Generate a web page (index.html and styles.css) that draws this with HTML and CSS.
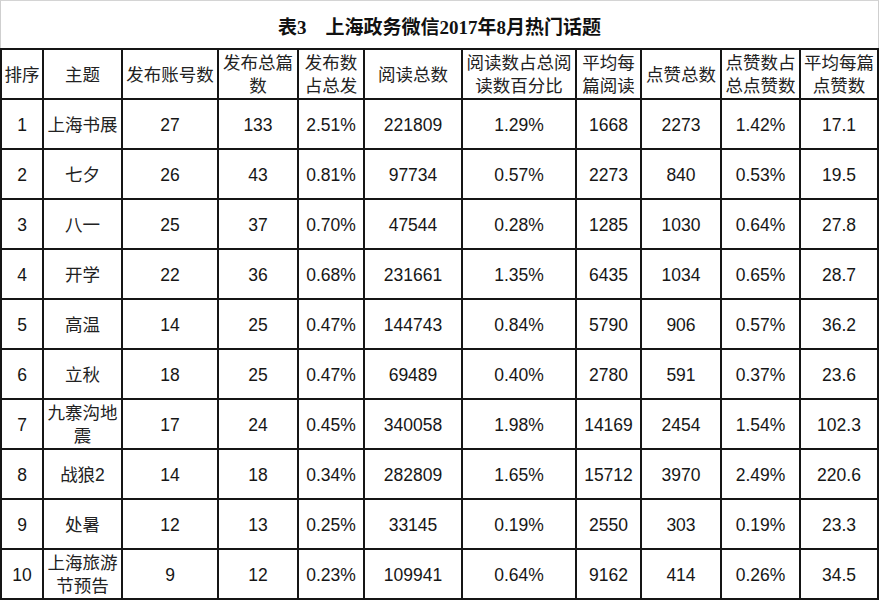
FILE: index.html
```html
<!DOCTYPE html>
<html lang="zh-CN">
<head>
<meta charset="utf-8">
<title>表3 上海政务微信2017年8月热门话题</title>
<link rel="stylesheet" href="styles.css">
</head>
<body>
<div class="sheet">
  <div class="caption">表3　上海政务微信2017年8月热门话题</div>
  <table class="data">
    <colgroup>
      <col class="c1"><col class="c2"><col class="c3"><col class="c4"><col class="c5"><col class="c6">
      <col class="c7"><col class="c8"><col class="c9"><col class="c10"><col class="c11">
    </colgroup>
    <thead>
      <tr>
        <th>排序</th><th>主题</th><th>发布账号数</th><th>发布总篇<br>数</th><th>发布数<br>占总发</th><th>阅读总数</th>
        <th>阅读数占总阅<br>读数百分比</th><th>平均每<br>篇阅读</th><th>点赞总数</th><th>点赞数占<br>总点赞数</th><th>平均每篇<br>点赞数</th>
      </tr>
    </thead>
    <tbody>
      <tr><td>1</td><td class="topic">上海书展</td><td>27</td><td>133</td><td>2.51%</td><td>221809</td><td>1.29%</td><td>1668</td><td>2273</td><td>1.42%</td><td>17.1</td></tr>
      <tr><td>2</td><td class="topic">七夕</td><td>26</td><td>43</td><td>0.81%</td><td>97734</td><td>0.57%</td><td>2273</td><td>840</td><td>0.53%</td><td>19.5</td></tr>
      <tr><td>3</td><td class="topic">八一</td><td>25</td><td>37</td><td>0.70%</td><td>47544</td><td>0.28%</td><td>1285</td><td>1030</td><td>0.64%</td><td>27.8</td></tr>
      <tr><td>4</td><td class="topic">开学</td><td>22</td><td>36</td><td>0.68%</td><td>231661</td><td>1.35%</td><td>6435</td><td>1034</td><td>0.65%</td><td>28.7</td></tr>
      <tr><td>5</td><td class="topic">高温</td><td>14</td><td>25</td><td>0.47%</td><td>144743</td><td>0.84%</td><td>5790</td><td>906</td><td>0.57%</td><td>36.2</td></tr>
      <tr><td>6</td><td class="topic">立秋</td><td>18</td><td>25</td><td>0.47%</td><td>69489</td><td>0.40%</td><td>2780</td><td>591</td><td>0.37%</td><td>23.6</td></tr>
      <tr><td>7</td><td class="topic">九寨沟地<br>震</td><td>17</td><td>24</td><td>0.45%</td><td>340058</td><td>1.98%</td><td>14169</td><td>2454</td><td>1.54%</td><td>102.3</td></tr>
      <tr><td>8</td><td class="topic">战狼2</td><td>14</td><td>18</td><td>0.34%</td><td>282809</td><td>1.65%</td><td>15712</td><td>3970</td><td>2.49%</td><td>220.6</td></tr>
      <tr><td>9</td><td class="topic">处暑</td><td>12</td><td>13</td><td>0.25%</td><td>33145</td><td>0.19%</td><td>2550</td><td>303</td><td>0.19%</td><td>23.3</td></tr>
      <tr><td>10</td><td class="topic">上海旅游<br>节预告</td><td>9</td><td>12</td><td>0.23%</td><td>109941</td><td>0.64%</td><td>9162</td><td>414</td><td>0.26%</td><td>34.5</td></tr>
    </tbody>
  </table>
</div>
</body>
</html>
```

FILE: styles.css
```css
* { box-sizing: border-box; }

html, body {
  margin: 0;
  padding: 0;
  background: #ffffff;
}

.sheet {
  width: 879px;
}

.caption {
  height: 48px;
  display: flex;
  align-items: center;
  justify-content: center;
  padding-top: 2px;
  border-top: 1px solid #d4d4d4;
  border-left: 1px solid #cfcfcf;
  border-right: 1px solid #cfcfcf;
  font-family: "Liberation Serif", "Noto Sans CJK SC", serif;
  font-weight: 700;
  font-size: 19px;
  color: #111;
}

.data {
  width: 879px;
  table-layout: fixed;
  border-collapse: separate;
  border-spacing: 0;
  border-top: 2px solid #151515;
  border-left: 2px solid #151515;
  font-family: "Liberation Sans", "Noto Sans CJK SC", sans-serif;
  font-size: 17.5px;
  color: #161616;
}

.c1 { width: 42px; }
.c2 { width: 79px; }
.c3 { width: 96px; }
.c4 { width: 80px; }
.c5 { width: 66px; }
.c6 { width: 98px; }
.c7 { width: 114px; }
.c8 { width: 65px; }
.c9 { width: 80px; }
.c10 { width: 79px; }
.c11 { width: 78px; }

.data th,
.data td {
  height: 50px;
  padding: 2px 0 0;
  text-align: center;
  vertical-align: middle;
  border-right: 2px solid #151515;
  border-bottom: 2px solid #151515;
  line-height: 23px;
  white-space: nowrap;
  overflow: hidden;
}

.data th {
  font-weight: 400;
  color: #222;
  letter-spacing: 0;
}

.data td.topic {
  color: #222;
}
```
